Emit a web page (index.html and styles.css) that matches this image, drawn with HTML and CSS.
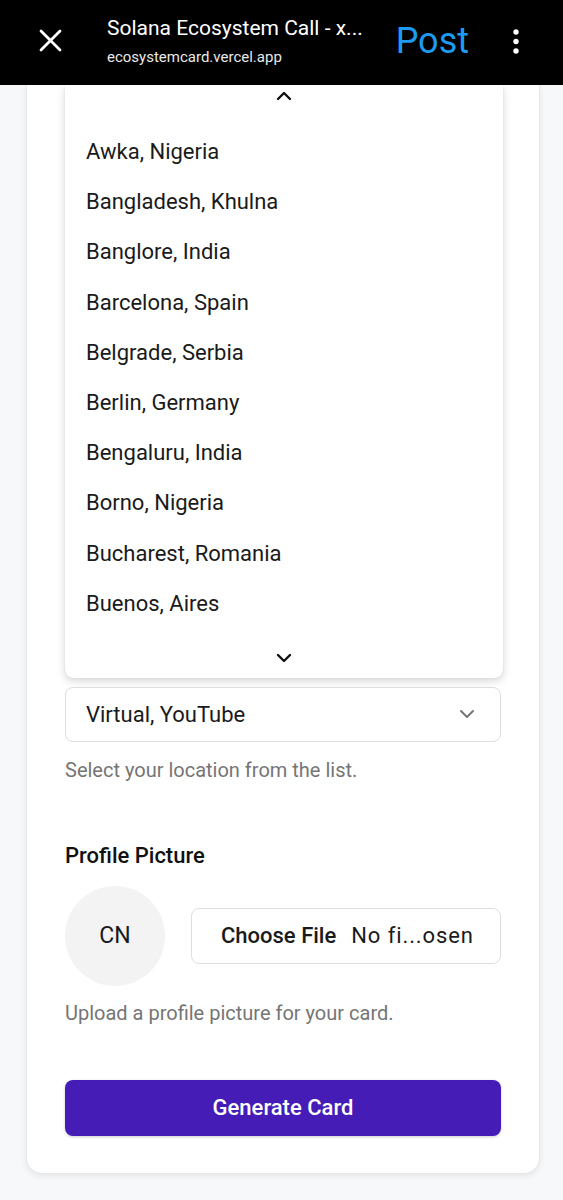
FILE: index.html
```html
<!DOCTYPE html>
<html lang="en">
<head>
    <meta charset="UTF-8">
    <meta name="viewport" content="width=device-width, initial-scale=1.0">
    <title>Solana Ecosystem Call</title>
    <link rel="stylesheet" href="styles.css">
</head>
<body>
    <header class="topbar">
        <svg class="close-icon" width="23" height="23" viewBox="0 0 23 23">
            <path d="M2 2 L21 21 M21 2 L2 21" stroke="#fff" stroke-width="2.8" stroke-linecap="round"/>
        </svg>
        <div class="page-info">
            <div class="page-title">Solana Ecosystem Call - x...</div>
            <div class="page-url">ecosystemcard.vercel.app</div>
        </div>
        <span class="post-link">Post</span>
        <svg class="menu-icon" width="6" height="25" viewBox="0 0 6 25">
            <circle cx="3" cy="3" r="2.7" fill="#fff"/>
            <circle cx="3" cy="12.5" r="2.7" fill="#fff"/>
            <circle cx="3" cy="22" r="2.7" fill="#fff"/>
        </svg>
    </header>

    <main class="page">
        <div class="card">
            <div class="listbox">
                <div class="scroll-arrow up">
                    <svg width="16" height="10" viewBox="0 0 16 10">
                        <path d="M2 8 L8 2 L14 8" fill="none" stroke="#111" stroke-width="2.4" stroke-linecap="round" stroke-linejoin="round"/>
                    </svg>
                </div>
                <ul class="options">
                    <li>Awka, Nigeria</li>
                    <li>Bangladesh, Khulna</li>
                    <li>Banglore, India</li>
                    <li>Barcelona, Spain</li>
                    <li>Belgrade, Serbia</li>
                    <li>Berlin, Germany</li>
                    <li>Bengaluru, India</li>
                    <li>Borno, Nigeria</li>
                    <li>Bucharest, Romania</li>
                    <li>Buenos, Aires</li>
                </ul>
                <div class="scroll-arrow down">
                    <svg width="16" height="10" viewBox="0 0 16 10">
                        <path d="M2 2 L8 8 L14 2" fill="none" stroke="#111" stroke-width="2.4" stroke-linecap="round" stroke-linejoin="round"/>
                    </svg>
                </div>
            </div>

            <div class="select">
                <span>Virtual, YouTube</span>
                <svg width="16" height="10" viewBox="0 0 16 10">
                    <path d="M2 2 L8 8 L14 2" fill="none" stroke="#777" stroke-width="2" stroke-linecap="round" stroke-linejoin="round"/>
                </svg>
            </div>
            <p class="hint">Select your location from the list.</p>

            <h2 class="field-label">Profile Picture</h2>
            <div class="upload-row">
                <div class="avatar">CN</div>
                <div class="file-input">
                    <span class="file-button">Choose File</span>
                    <span class="file-name">No fi...osen</span>
                </div>
            </div>
            <p class="hint upload-hint">Upload a profile picture for your card.</p>

            <button class="generate-btn" type="button">Generate Card</button>
        </div>
    </main>
</body>
</html>
```

FILE: styles.css
```css
* {
    box-sizing: border-box;
}
body {
    margin: 0;
    font-family: Roboto, "Liberation Sans", Arial, sans-serif;
    background-color: #f7f8fa;
    color: #1a1a1a;
}

/* browser bar */
.topbar {
    display: flex;
    align-items: center;
    height: 85px;
    padding: 0 44px 0 39px;
    background-color: #000;
    color: #fff;
}
.close-icon {
    flex-shrink: 0;
    margin-top: -4px;
}
.page-info {
    flex: 1;
    margin-left: 45px;
    margin-top: -3px;
}
.page-title {
    font-size: 21px;
    line-height: 28px;
}
.page-url {
    margin-top: 4px;
    font-size: 15px;
    line-height: 22px;
    color: #e8e8e8;
}
.post-link {
    font-size: 36px;
    color: #1d9bf0;
    margin-right: 44px;
    margin-top: -3px;
}
.menu-icon {
    margin-top: -3px;
}

/* form card */
.page {
    padding: 0 23px 27px 26px;
}
.card {
    background-color: #fff;
    border: 1px solid #e6e7ea;
    border-top: none;
    border-radius: 0 0 16px 16px;
    box-shadow: 0 2px 6px rgba(0,0,0,0.08);
    padding: 0 38px 37px 38px;
}

.listbox {
    margin-right: -2px;
    background-color: #fff;
    border-radius: 0 0 8px 8px;
    box-shadow: 0 3px 8px rgba(0,0,0,0.16), 0 0 1px rgba(0,0,0,0.2);
}
.scroll-arrow {
    display: flex;
    justify-content: center;
}
.scroll-arrow.up {
    height: 42px;
    padding-top: 6px;
}
.scroll-arrow.down {
    height: 49px;
    padding-top: 24px;
}
.options {
    list-style: none;
    margin: 0;
    padding: 0;
}
.options li {
    height: 50.2px;
    line-height: 50.2px;
    padding-left: 21px;
    font-size: 22px;
    color: #1a1a1a;
}

.select {
    display: flex;
    align-items: center;
    justify-content: space-between;
    height: 55px;
    margin-top: 9px;
    padding: 0 25px 0 20px;
    border: 1px solid #dedede;
    border-radius: 8px;
    font-size: 22px;
}
.hint {
    margin: 15px 0 0;
    font-size: 20px;
    line-height: 26px;
    color: #757575;
}
.field-label {
    margin: 58px 0 0;
    font-size: 22px;
    line-height: 30px;
    font-weight: 500;
    color: #111;
}
.upload-row {
    display: flex;
    align-items: center;
    gap: 26px;
    margin-top: 15px;
}
.avatar {
    display: flex;
    align-items: center;
    justify-content: center;
    flex-shrink: 0;
    width: 100px;
    height: 100px;
    border-radius: 50%;
    background-color: #f3f3f3;
    font-size: 23px;
    color: #1a1a1a;
}
.file-input {
    flex: 1;
    display: flex;
    align-items: center;
    height: 56px;
    padding-left: 29px;
    border: 1px solid #dedede;
    border-radius: 8px;
    font-size: 22px;
}
.file-button {
    font-weight: 500;
    margin-right: 15px;
}
.file-name {
    letter-spacing: 0.9px;
}
.upload-hint {
    margin-top: 14px;
}
.generate-btn {
    display: block;
    width: 100%;
    height: 56px;
    margin-top: 54px;
    border: none;
    border-radius: 8px;
    background-color: #451db6;
    color: #fff;
    font-family: inherit;
    font-size: 22px;
    font-weight: 500;
    box-shadow: 0 1px 3px rgba(0,0,0,0.2);
}
```
